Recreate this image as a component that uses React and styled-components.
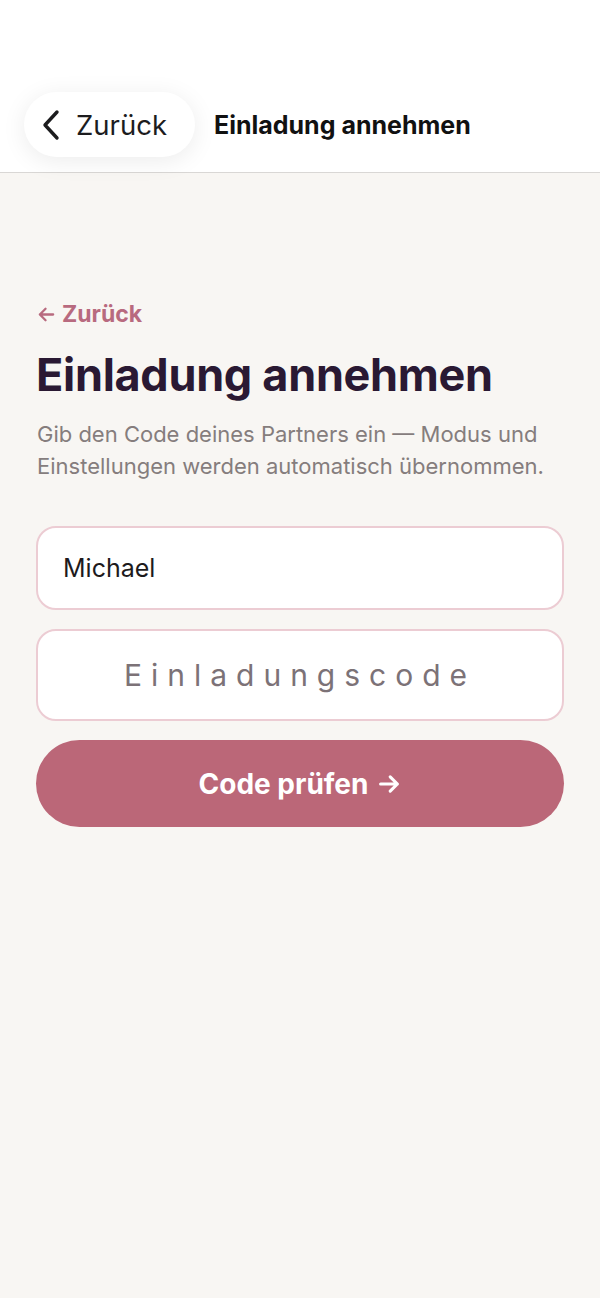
import styled, { createGlobalStyle } from 'styled-components';

const GlobalStyle = createGlobalStyle`
  html, body {
    margin: 0;
    padding: 0;
    background: #f8f6f3;
  }
  body {
    font-family: Inter, "Noto Sans", sans-serif;
    -webkit-font-smoothing: antialiased;
  }
`;

const Page = styled.div`
  min-height: 1298px;
  background: #f8f6f3;
`;

const NavBar = styled.header`
  height: 173px;
  background: #ffffff;
  border-bottom: 1px solid #d9d7d5;
  display: flex;
  align-items: flex-end;
  padding: 0 24px 15px;
  box-sizing: border-box;
  gap: 19px;
`;

const NavBack = styled.button`
  height: 65px;
  padding: 0 28px 0 17px;
  border: none;
  border-radius: 33px;
  background: #ffffff;
  box-shadow: 0 4px 24px rgba(0, 0, 0, 0.08);
  display: flex;
  align-items: center;
  gap: 15px;
  font-family: Inter, sans-serif;
  font-size: 27.5px;
  color: #1c1c1e;
  cursor: pointer;
`;

const NavTitle = styled.h1`
  margin: 0;
  height: 65px;
  display: flex;
  align-items: center;
  font-size: 25px;
  font-weight: 700;
  color: #111111;
`;

const Content = styled.main`
  padding: 127px 36px 0;
  display: flex;
  flex-direction: column;
`;

const BackLink = styled.a`
  display: flex;
  align-items: center;
  gap: 6px;
  font-size: 23px;
  line-height: 28px;
  font-weight: 700;
  color: #b86a7f;
  text-decoration: none;
  margin-left: 1px;
`;

const Heading = styled.h2`
  margin: 20px 0 0;
  font-size: 45px;
  font-weight: 700;
  letter-spacing: -0.3px;
  color: #2a1933;
  line-height: 54px;
`;

const Lead = styled.p`
  margin: 16px 0 0 1px;
  font-size: 22px;
  line-height: 32px;
  color: #857d7d;
`;

const Form = styled.form`
  margin-top: 44px;
  display: flex;
  flex-direction: column;
  gap: 19px;
`;

const Field = styled.input`
  box-sizing: border-box;
  width: 100%;
  height: ${(p) => (p.$tall ? '92px' : '84px')};
  border: 2px solid #ecccd3;
  border-radius: 20px;
  background: #ffffff;
  padding: 0 25px;
  font-family: Inter, sans-serif;
  font-size: ${(p) => (p.$code ? '30px' : '25px')};
  letter-spacing: ${(p) => (p.$code ? '0.3em' : '0')};
  text-align: ${(p) => (p.$code ? 'center' : 'left')};
  color: #1d1a1c;
  outline: none;

  &::placeholder {
    color: #7c7277;
    opacity: 1;
  }
`;

const Submit = styled.button`
  height: 87px;
  border: none;
  border-radius: 44px;
  background: #bb6778;
  color: #ffffff;
  font-family: Inter, sans-serif;
  font-size: 28px;
  font-weight: 700;
  display: flex;
  align-items: center;
  justify-content: center;
  gap: 9px;
  cursor: pointer;
`;

const Chevron = () => (
  <svg width="20" height="32" viewBox="0 0 20 32" fill="none">
    <path d="M16 3 L4 16 L16 29" stroke="#1c1c1e" strokeWidth="3.4" strokeLinecap="round" strokeLinejoin="round" />
  </svg>
);

const Arrow = ({ dir = 'right', size = 20, color = '#fff', width = 2.6 }) => (
  <svg width={size} height={size} viewBox="0 0 20 20" fill="none">
    {dir === 'right' ? (
      <path d="M3 10 H17 M11 4 L17 10 L11 16" stroke={color} strokeWidth={width} strokeLinecap="round" strokeLinejoin="round" />
    ) : (
      <path d="M17 10 H3 M9 4 L3 10 L9 16" stroke={color} strokeWidth={width} strokeLinecap="round" strokeLinejoin="round" />
    )}
  </svg>
);

export default function App() {
  return (
    <Page>
      <GlobalStyle />
      <NavBar>
        <NavBack type="button">
          <Chevron />
          Zurück
        </NavBack>
        <NavTitle>Einladung annehmen</NavTitle>
      </NavBar>
      <Content>
        <BackLink href="#">
          <Arrow dir="left" size={19} color="#b86a7f" width={2.4} />
          Zurück
        </BackLink>
        <Heading>Einladung annehmen</Heading>
        <Lead>
          Gib den Code deines Partners ein — Modus und Einstellungen werden automatisch übernommen.
        </Lead>
        <Form onSubmit={(e) => e.preventDefault()}>
          <Field defaultValue="Michael" />
          <Field $tall $code placeholder="Einladungscode" />
          <Submit type="submit">
            Code prüfen
            <Arrow size={24} />
          </Submit>
        </Form>
      </Content>
    </Page>
  );
}
